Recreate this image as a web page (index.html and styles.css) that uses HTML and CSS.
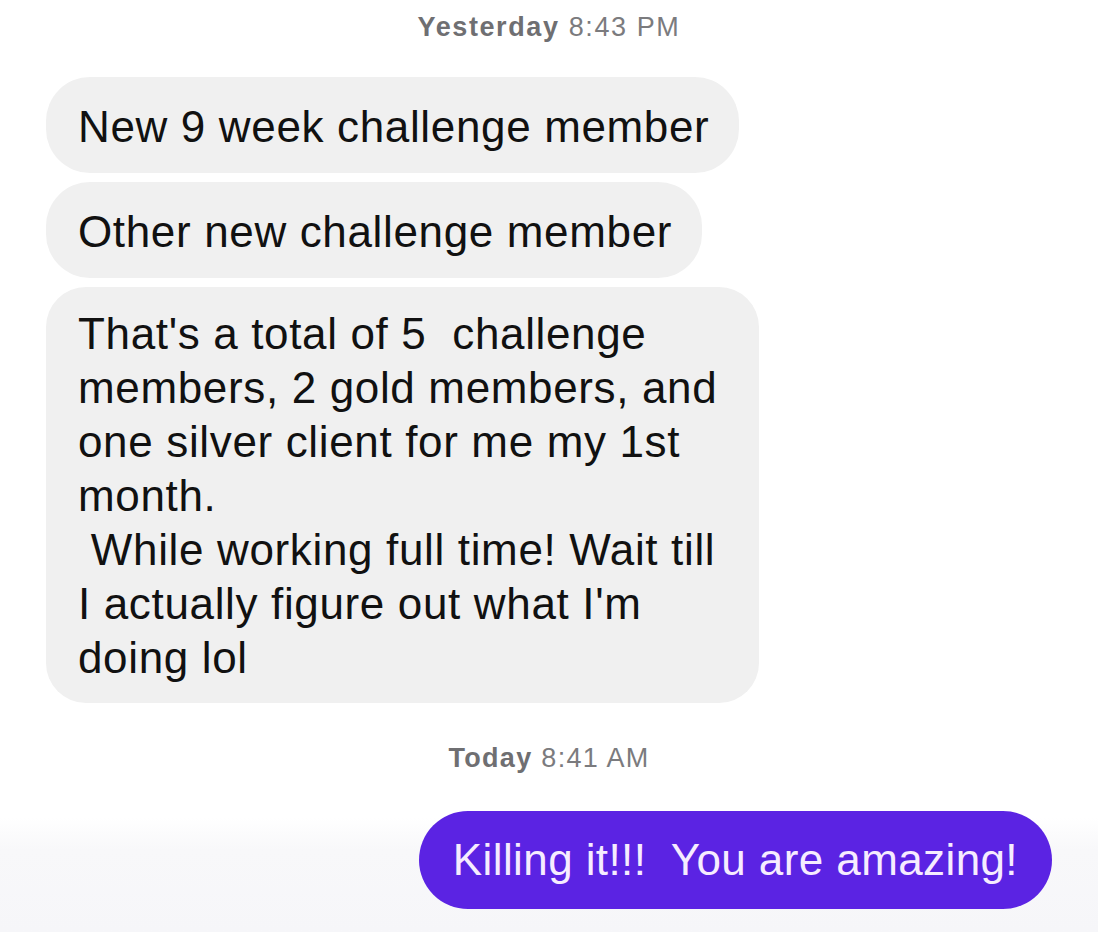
FILE: index.html
```html
<!DOCTYPE html>
<html lang="en">
<head>
  <meta charset="UTF-8">
  <title>Messages</title>
  <link rel="stylesheet" href="styles.css">
</head>
<body>

  <div class="chat">
    <p class="stamp"><strong>Yesterday</strong> 8:43 PM</p>

    <div class="msg in">New 9 week challenge member</div>
    <div class="msg in">Other new challenge member</div>
    <div class="msg in long">That's a total of 5&nbsp; challenge<br>members, 2 gold members, and<br>one silver client for me my 1st<br>month.<br>&nbsp;While working full time! Wait till<br>I actually figure out what I'm<br>doing lol</div>

    <p class="stamp later"><strong>Today</strong> 8:41 AM</p>

    <div class="msg out">Killing it!!!&nbsp; You are amazing!</div>
  </div>

</body>
</html>
```

FILE: styles.css
```css
* { box-sizing: border-box; }

body {
  margin: 0;
  font-family: 'Liberation Sans', Arial, sans-serif;
  background: linear-gradient(to bottom, #fff 818px, #f8f8fa 850px, #f6f6f9 100%);
  min-height: 932px;
  color: #111;
}

.chat {
  display: flex;
  flex-direction: column;
  align-items: flex-start;
  gap: 9px;
  padding: 12px 46px 0;
}

.stamp {
  align-self: center;
  margin: 0 0 26px;
  font-size: 27px;
  line-height: 30px;
  letter-spacing: 1.6px;
  color: #7b7b7e;
}

.stamp strong {
  font-weight: bold;
  color: #6f6f72;
}

.stamp.later {
  margin: 31px 0 29px;
  letter-spacing: 1.3px;
}

.msg {
  font-size: 44px;
  line-height: 54px;
  letter-spacing: 0.65px;
  padding: 23px 30px 19px 32px;
  border-radius: 44px;
  white-space: nowrap;
}

.msg.in {
  background: #f0f0f0;
}

.msg.long {
  padding: 20px 42px 18px 32px;
  border-radius: 40px;
}

.msg.out {
  align-self: flex-end;
  background: #5b23e3;
  color: #f6ecff;
  border-radius: 49px;
  padding: 22px 34px;
  letter-spacing: 0.4px;
}
```
